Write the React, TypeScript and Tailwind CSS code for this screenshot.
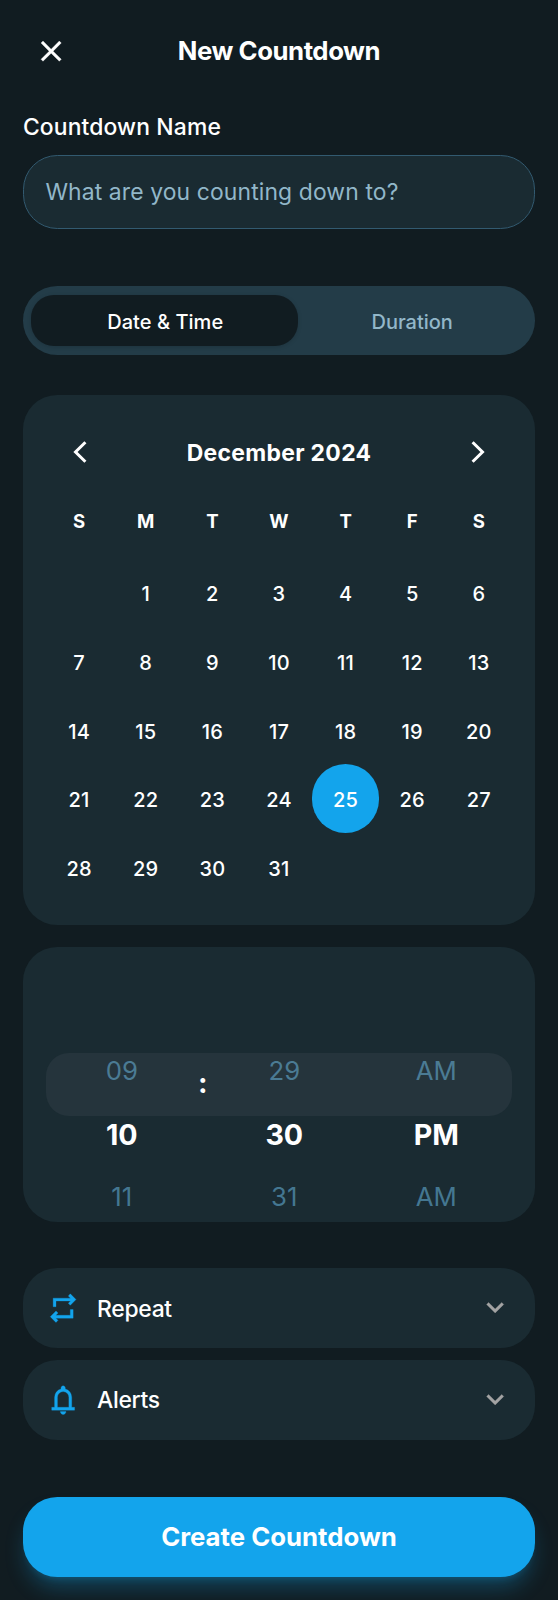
import React from "react";

const weekdays = ["S", "M", "T", "W", "T", "F", "S"];
const days = Array.from({ length: 31 }, (_, i) => i + 1);

function Icon({ d, className }: { d: string; className?: string }) {
  return (
    <svg
      viewBox="0 0 24 24"
      fill="currentColor"
      stroke="currentColor"
      strokeWidth="0.2"
      className={`size-[34.3px] shrink-0 ${className ?? ""}`}
    >
      <path d={d} />
    </svg>
  );
}

const REPEAT =
  "m7 22-4-4 4-4 1.4 1.45L6.85 17H17v-4h2v6H6.85l1.55 1.55L7 22ZM5 11V5h12.15L15.6 3.45 17 2l4 4-4 4-1.4-1.45L17.15 7H7v4H5Z";
const BELL =
  "M4 19v-2h2v-7q0-2.075 1.25-3.688T10.5 4.2v-.7q0-.625.438-1.063T12 2q.625 0 1.063.438T13.5 3.5v.7q2 .5 3.25 2.113T18 10v7h2v2H4Zm8 3q-.825 0-1.413-.588T10 20h4q0 .825-.588 1.413T12 22Zm-4-5h8v-7q0-1.65-1.175-2.825T12 6q-1.65 0-2.825 1.175T8 10v7Z";
const CHEVRON_DOWN = "m12 15.4-6-6L7.4 8l4.6 4.6L16.6 8 18 9.4l-6 6Z";
const CLOSE =
  "M6.3 19.1 4.9 17.7 10.6 12 4.9 6.3 6.3 4.9 12 10.6 17.7 4.9 19.1 6.3 13.4 12 19.1 17.7 17.7 19.1 12 13.4Z";

function Column({ items, className }: { items: string[]; className: string }) {
  return (
    <div className={`flex flex-col items-center text-center ${className}`}>
      <span className="h-[63px] text-[25.75px] leading-[36px] text-[#4b7b94]">{items[0]}</span>
      <span className="h-[63px] text-[28.6px] leading-[37px] font-bold">{items[1]}</span>
      <span className="text-[25.75px] leading-[36px] text-[#447791]">{items[2]}</span>
    </div>
  );
}

function OptionRow({ icon, label }: { icon: string; label: string }) {
  return (
    <button className="flex h-[80px] w-full items-center rounded-[34.3px] bg-[#1a2b32] px-[22.9px]">
      <Icon d={icon} className="text-[#13a4ec]" />
      <span className="ml-[17px] flex-1 pt-[2px] text-left text-[22.9px] font-medium tracking-[-0.3px]">{label}</span>
      <Icon d={CHEVRON_DOWN} className="text-[#a3a3a3]" />
    </button>
  );
}

export default function App() {
  return (
    <div className="flex h-[1600px] w-[558px] flex-col overflow-hidden bg-[#111c21] font-['Inter',sans-serif] text-white">
      <header className="flex h-[92px] items-center px-[22.9px] pt-[11px]">
        <button className="flex size-[57.2px] items-center justify-center">
          <Icon d={CLOSE} />
        </button>
        <h1 className="flex-1 pr-[57.2px] text-center text-[25.75px] font-bold tracking-[-0.018em]">New Countdown</h1>
      </header>

      <main className="flex flex-1 flex-col px-[22.9px]">
        <label className="mt-[17.5px] text-[22.9px] leading-[34px] font-medium tracking-[0.13px]">Countdown Name</label>
        <input
          className="mt-[11.2px] h-[74.3px] rounded-[34.3px] border-[1.4px] border-[#325a70] bg-[#1a2b32] px-[21.5px] text-[22.9px] tracking-[0.12px] placeholder:text-[#92b7c9]"
          placeholder="What are you counting down to?"
        />

        <div className="mt-[57px] flex h-[69px] rounded-[34.3px] bg-[#233c48] px-[8.6px] py-[8.6px] text-[20px] font-medium">
          <button className="w-[266.4px] rounded-[22.9px] bg-[#111c21] pt-[4px] pl-[1px] tracking-[0.05px] shadow-[0_1px_4px_rgba(0,0,0,0.15)]">
            Date &amp; Time
          </button>
          <button className="flex-1 pt-[4px] text-[#92b7c9]">Duration</button>
        </div>

        <section className="mt-[40px] h-[529.7px] rounded-[34.3px] bg-[#1a2b32] p-[22.9px]">
          <div className="flex h-[68.7px] items-center justify-between">
            <span className="flex w-[68.6px] justify-center">
              <svg viewBox="0 0 14 22" className="h-[22px] w-[14px]" fill="none" stroke="white" strokeWidth="3">
                <path d="M12.4 1.2 2.5 11l9.9 9.8" />
              </svg>
            </span>
            <h2 className="pt-[1px] text-[22.9px] font-bold tracking-[0.33px]">December 2024</h2>
            <span className="flex w-[68.6px] justify-center">
              <svg viewBox="0 0 14 22" className="h-[22px] w-[14px]" fill="none" stroke="white" strokeWidth="3">
                <path d="M1.6 1.2 11.5 11l-9.9 9.8" />
              </svg>
            </span>
          </div>
          <div className="grid grid-cols-7 text-center">
            {weekdays.map((d, i) => (
              <span key={i} className="h-[71.4px] text-[18.6px] leading-[69px] font-bold">
                {d}
              </span>
            ))}
            {days.map((d) => (
              <button
                key={d}
                className={`flex h-[68.7px] items-center justify-center rounded-full pt-[4px] text-[20px] font-medium tracking-[0.2px] ${
                  d === 1 ? "col-start-2" : ""
                } ${d === 25 ? "bg-[#13a4ec]" : ""}`}
              >
                {d}
              </button>
            ))}
          </div>
        </section>

        <section className="relative mt-[22.6px] h-[275px] rounded-[34.3px] bg-[#1a2b32]">
          <div className="absolute inset-x-[22.9px] top-[106px] h-[63px] rounded-[22.9px] bg-[#25343c]" />
          <div className="relative flex pt-[106px]">
            <Column items={["09", "10", "11"]} className="ml-[22.9px] w-[152px]" />
            <span className="w-[10px] text-center text-[28.6px] leading-[59px] font-bold">:</span>
            <Column items={["29", "30", "31"]} className="w-[153px]" />
            <Column items={["AM", "PM", "AM"]} className="w-[151px]" />
          </div>
        </section>

        <div className="mt-[46px] flex flex-col gap-[11.4px]">
          <OptionRow icon={REPEAT} label="Repeat" />
          <OptionRow icon={BELL} label="Alerts" />
        </div>

        <button className="mt-[57.6px] h-[80px] rounded-[34.3px] bg-[#13a4ec] text-[25.75px] font-bold shadow-[0_14px_21px_-4px_rgba(19,164,236,0.3),0_6px_9px_-6px_rgba(19,164,236,0.3)]">
          Create Countdown
        </button>
      </main>
    </div>
  );
}
